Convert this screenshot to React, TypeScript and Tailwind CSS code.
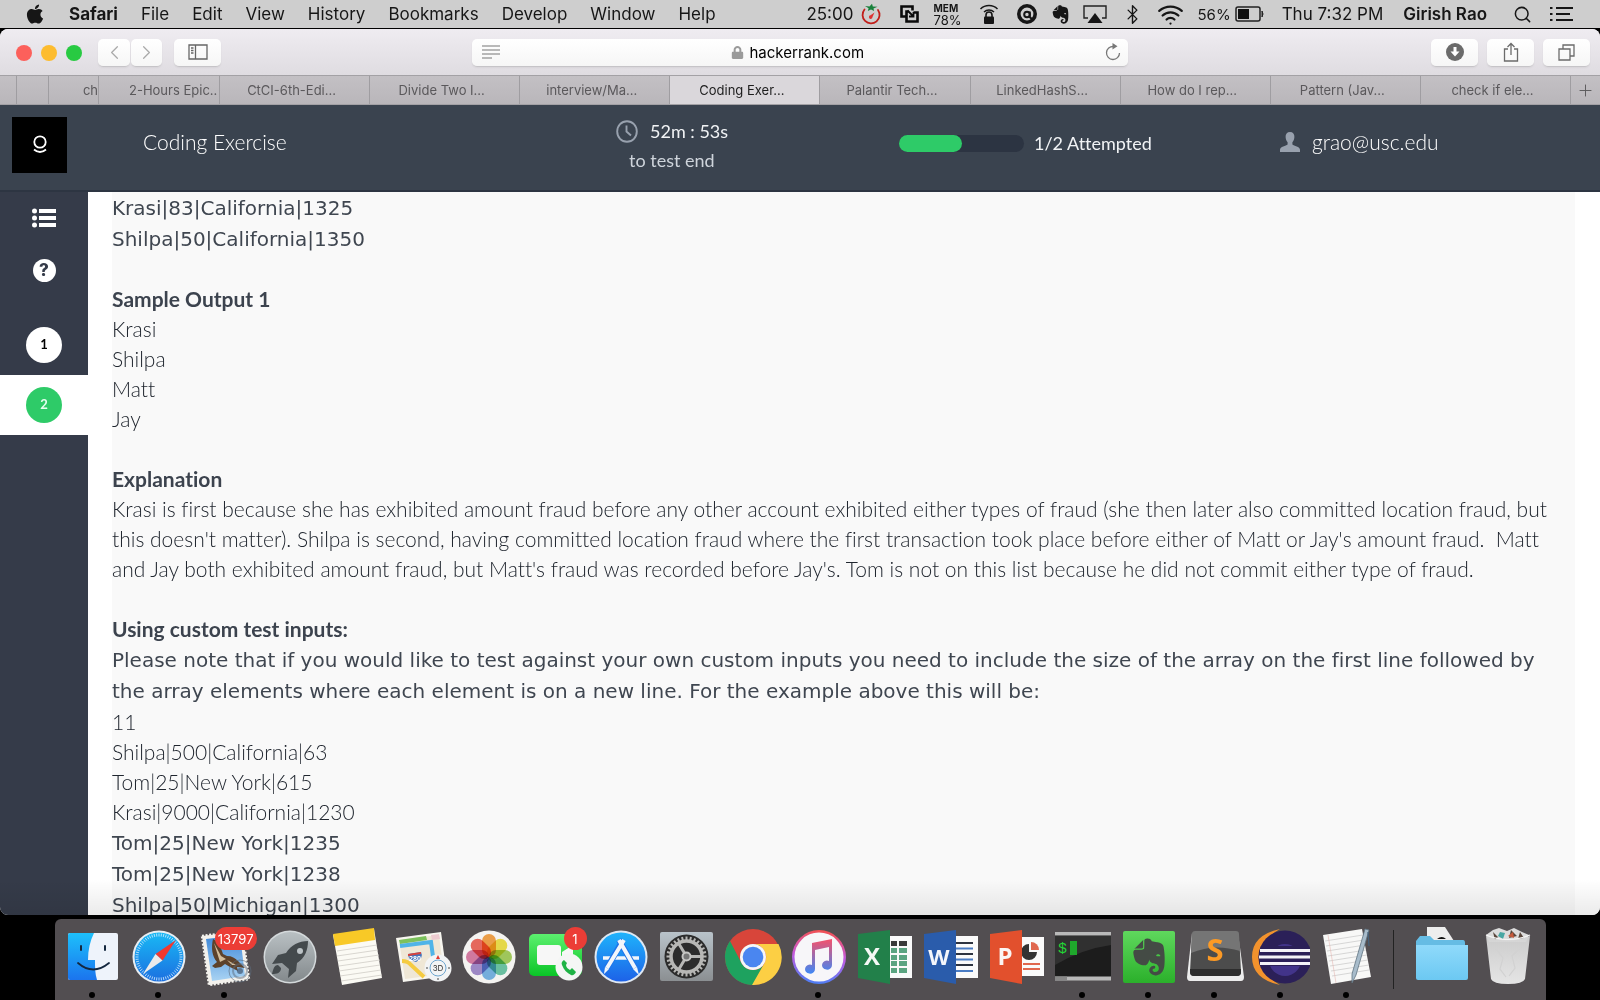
import React from "react";
import { FaApple, FaLock, FaEvernote } from "react-icons/fa";
import { Bluetooth, Wifi, Search, ChevronLeft, ChevronRight, Plus } from "lucide-react";

const menus = ["File", "Edit", "View", "History", "Bookmarks", "Develop", "Window", "Help"];

function MenuBar() {
  return (
    <header className="flex h-[28px] shrink-0 items-center justify-between bg-[#cecece] font-['Inter','Roboto',sans-serif] text-[17px] leading-[27px] whitespace-nowrap text-[#161616]">
      <nav aria-label="Menu bar" className="flex items-center gap-[23px] pl-6">
        <button aria-label="Apple" className="flex">
          <FaApple size={22} />
        </button>
        <button className="font-bold">Safari</button>
        {menus.map((m) => (
          <button key={m}>{m}</button>
        ))}
      </nav>
      <div className="flex items-center pr-[26px]">
        <span>25:00</span>
        <svg className="ml-2" width="20" height="22" viewBox="0 0 20 22" fill="none">
          <path d="M3.500 6.500A8.500 8.500 0 1 0 17 7" stroke="#c11f1a" strokeWidth="1.800" strokeLinecap="round" />
          <path d="M4 3l4.500.6L11 .8l.8 2.800 4.700.2-4 1.700.6 2.500-3.100-1.600-3.200 1.600.8-2.800z" fill="#18803a" />
          <path d="M13.500 9.500l-2 4.500a1.800 1.800 0 1 1-2-1.700z" fill="#d33" />
        </svg>
        <svg className="ml-[18px]" width="20" height="20" viewBox="0 0 20 20" fill="none" stroke="#0b0b0b" strokeWidth="2.600">
          <path d="M7 12.500H2.500V2.500h11v4" />
          <path d="M9.500 7.500H7.500V17.500h11v-9h-4" />
          <path d="M8.500 6.500l6 6M14.500 8v4.500H10" strokeWidth="1.800" />
        </svg>
        <span className="ml-[14px] flex flex-col text-[13px] leading-[13px]">
          <b className="text-[10px] leading-[12px]">MEM</b>
          <span>78%</span>
        </span>
        <svg className="ml-[18px]" width="20" height="22" viewBox="0 0 20 22" fill="none" stroke="#161616">
          <path d="M1.500 6a12 12 0 0 1 17 0M5 9a7.500 7.500 0 0 1 10 0" strokeWidth="1.500" />
          <path d="M7 14v-2a3 3 0 0 1 6 0v2" strokeWidth="1.600" />
          <rect x="5" y="13.500" width="10" height="7.500" rx="1" fill="#161616" stroke="none" />
        </svg>
        <svg className="ml-[18px]" width="20" height="20" viewBox="0 0 20 20">
          <circle cx="10" cy="10" r="8.200" fill="none" stroke="#161616" strokeWidth="3.600" />
          <circle cx="10" cy="10.500" r="2.800" fill="none" stroke="#161616" strokeWidth="2" />
          <path d="M12.800 7.500v5.500l2.500 2.500" fill="none" stroke="#161616" strokeWidth="2" />
        </svg>
        <FaEvernote className="ml-[13px]" size={21} />
        <svg className="ml-3" width="24" height="20" viewBox="0 0 24 20" fill="none">
          <path d="M5 14H1V2h22v12h-4" stroke="#222" strokeWidth="1.400" />
          <path d="M12 9l7.500 10h-15z" fill="#161616" />
        </svg>
        <Bluetooth className="ml-[15px]" size={21} strokeWidth={1.6} />
        <Wifi className="ml-[14px]" size={27} strokeWidth={2} />
        <span className="ml-[13px] text-[15px]">56%</span>
        <svg className="ml-1" width="29" height="16" viewBox="0 0 29 16">
          <rect x="1" y="1" width="24" height="14" rx="2" fill="none" stroke="#222" strokeWidth="1.500" />
          <rect x="3" y="3" width="11" height="10" fill="#111" />
          <path d="M27 5q2 3 0 6z" fill="#222" stroke="#222" />
        </svg>
        <span className="ml-[18px]">Thu 7:32 PM</span>
        <button className="ml-5 font-semibold">Girish Rao</button>
        <button aria-label="Search" className="ml-[26px]">
          <Search size={19} strokeWidth={1.9} />
        </button>
        <button aria-label="Notifications" className="ml-[18px]">
          <svg width="24" height="14" viewBox="0 0 24 14" stroke="#161616" strokeWidth="2">
            <path d="M0 1h2.500M0 7h2.500M0 13h2.500M6 1h17M6 7h14M6 13h17" />
          </svg>
        </button>
      </div>
    </header>
  );
}

const toolButton =
  "flex h-[28px] items-center justify-center rounded-[5px] border-b border-[#c6c4c8] bg-linear-to-b from-white to-[#f6f6f6] text-[#6b6b6b] shadow-xs";

function Toolbar() {
  return (
    <div className="grid h-[46px] shrink-0 grid-cols-[1fr_41.5%_1fr] items-center bg-linear-to-b from-[#efecf1] to-[#dfdce1] px-[10px] pt-px">
      <div className="flex items-center">
        <div className="flex gap-[9px] pl-[6px]">
          <button aria-label="Close" className="size-4 rounded-full bg-[#fc605b]" />
          <button aria-label="Minimize" className="size-4 rounded-full bg-[#fdbc2f]" />
          <button aria-label="Zoom" className="size-4 rounded-full bg-[#28ca42]" />
        </div>
        <div className="ml-4 flex gap-[1px]">
          <button aria-label="Back" className={toolButton + " w-8"}>
            <ChevronLeft size={23} strokeWidth={1.3} className="text-[#aaa]" />
          </button>
          <button aria-label="Forward" className={toolButton + " w-[31px]"}>
            <ChevronRight size={23} strokeWidth={1.3} className="text-[#aaa]" />
          </button>
        </div>
        <button aria-label="Sidebar" className={toolButton + " ml-3 w-[47px]"}>
          <svg width="20" height="16" viewBox="0 0 20 16" fill="none" stroke="#666" strokeWidth="1.300">
            <path d="M1 1h18v14H1zM7.500 1v14M3 4h2.500M3 6.500h2.500M3 9h2.500" />
          </svg>
        </button>
      </div>
      <div className="flex h-[28px] items-center rounded-[5px] border-b border-[#c6c4c8] bg-linear-to-b from-white to-[#f6f6f6] px-[10px] shadow-xs">
        <svg width="18" height="14" viewBox="0 0 18 14" stroke="#777" strokeWidth="1.200">
          <path d="M0 1h18M0 5h18M0 9h18M0 13h10" />
        </svg>
        <div className="flex flex-1 items-center justify-center gap-[6px]">
          <FaLock size={13} className="text-[#9a9a9a]" />
          <label className="sr-only" htmlFor="address">Address</label>
          <input
            id="address"
            readOnly
            value="hackerrank.com"
            className="mt-px h-[24px] w-[124px] bg-transparent font-['Inter',sans-serif] text-[15px] leading-[24px] text-black outline-none"
          />
        </div>
        <button aria-label="Reload" className="mr-[-4px]">
          <svg width="18" height="18" viewBox="0 0 18 18" fill="none">
            <path d="M9.500 3.500A6.500 6.500 0 1 0 15.500 10" stroke="#777" strokeWidth="1.300" />
            <path d="M8.500 0l5 3.300-5 3.300z" fill="#777" />
          </svg>
        </button>
      </div>
      <div className="flex items-center justify-end gap-[9px]">
        <button aria-label="Downloads" className={toolButton + " w-[47px]"}>
          <svg width="18" height="18" viewBox="0 0 18 18">
            <circle cx="9" cy="9" r="9" fill="#6b6b6b" />
            <path d="M7.500 4h3v4.500h3L9 13.500 4.500 8.500h3z" fill="#fff" />
          </svg>
        </button>
        <button aria-label="Share" className={toolButton + " w-[47px]"}>
          <svg width="16" height="20" viewBox="0 0 16 20" fill="none" stroke="#6b6b6b" strokeWidth="1.300">
            <path d="M5 7H1.500v12h13V7H11M8 13V1.500M4.500 5L8 1.500 11.500 5" />
          </svg>
        </button>
        <button aria-label="Show all tabs" className={toolButton + " w-[47px]"}>
          <svg width="17" height="17" viewBox="0 0 17 17" fill="none" stroke="#6b6b6b" strokeWidth="1.300">
            <path d="M1 5h11v11H1zM5 5V1h11v11h-4" />
          </svg>
        </button>
      </div>
    </div>
  );
}

const tabs = [
  { title: "CtCI-6th-Edi..." },
  { title: "Divide Two I..." },
  { title: "interview/Ma..." },
  { title: "Coding Exer...", active: true },
  { title: "Palantir Tech..." },
  { title: "LinkedHashS..." },
  { title: "How do I rep..." },
  { title: "Pattern (Jav..." },
  { title: "check if ele..." },
];

function TabBar() {
  return (
    <div
      role="tablist"
      className="flex h-[30px] shrink-0 border-y border-[#a3a1a5] bg-linear-to-b from-[#c3c0c4] to-[#b9b6ba] font-['Inter',sans-serif] text-[13px] whitespace-nowrap text-[#5a585b]"
    >
      <button role="tab" aria-label="Tab" className="w-[17px] border-r border-[#9f9da1]" />
      <button role="tab" aria-label="Tab" className="w-8 border-r border-[#9f9da1]" />
      <button role="tab" className="flex w-[50px] items-center justify-end overflow-hidden border-r border-[#9f9da1] pt-px">
        <span>ch</span>
      </button>
      <button role="tab" className="flex w-[121px] items-center overflow-hidden border-r border-[#9f9da1] pt-px pl-[30px]">
        2-Hours Epic..
      </button>
      {tabs.map((t) => (
        <button
          key={t.title}
          role="tab"
          aria-selected={!!t.active}
          className={
            t.active
              ? "min-w-0 flex-1 border-r border-[#9f9da1] bg-[#dad7db] pt-px pr-[6px] text-[#1d1d1d]"
              : "min-w-0 flex-1 border-r border-[#9f9da1] pt-px pr-[6px]"
          }
        >
          {t.title}
        </button>
      ))}
      <button aria-label="New tab" className="flex w-[29px] items-center justify-center">
        <Plus size={19} strokeWidth={1.2} />
      </button>
    </div>
  );
}

function ExamHeader() {
  return (
    <div className="grid h-[87px] shrink-0 grid-cols-[143px_473fr_283fr_381fr_320fr] border-b-2 border-[#2d3542] bg-[#3a434f] font-['Lato',sans-serif] text-[18px] whitespace-nowrap text-[#f1f3f5] [font-variant-ligatures:none]">
      <div className="pt-3 pl-3">
        <div className="flex h-14 w-[55px] items-center justify-center bg-black">
          <svg width="14" height="20" viewBox="0 0 14 20" fill="none" stroke="#fff" strokeWidth="1.800">
            <circle cx="7" cy="7" r="5.700" />
            <path d="M1 14.500q6 5 12 0" />
          </svg>
        </div>
      </div>
      <h1 className="self-center pb-3 text-[21px] font-light text-white">Coding Exercise</h1>
      <div className="flex flex-col items-start pt-3">
        <div className="flex items-center gap-3 leading-[29px]">
          <svg width="22" height="24" viewBox="0 0 22 24" fill="none" stroke="#98a1ae" strokeWidth="1.900">
            <ellipse cx="11" cy="11.500" rx="9.800" ry="10.300" />
            <path d="M10.500 5.500v6l4.500 4" />
          </svg>
          <span>52m : 53s</span>
        </div>
        <span className="pl-[13px] leading-[29px] text-[#ced4db]">to test end</span>
      </div>
      <div className="flex items-center gap-[10px] pb-[9px]">
        <div
          role="progressbar"
          aria-label="Attempted"
          aria-valuenow={50}
          className="h-[17px] w-[125px] rounded-full bg-[#2c3442]"
        >
          <div className="h-full w-1/2 rounded-full bg-[#2ecb68]" />
        </div>
        <span>1/2 Attempted</span>
      </div>
      <div className="flex items-center gap-3 pb-3 text-[21px] font-light text-white">
        <svg width="20" height="20" viewBox="0 0 20 20" fill="#98a1ae">
          <path d="M10 0c3 0 4.600 2 4.400 5-.1 2.300-.9 4-2 5.200v2.300c1.500 1.800 7.600 2 7.600 5.200V20H0v-2.300c0-3.200 6.100-3.400 7.600-5.200v-2.300c-1.100-1.200-1.900-2.900-2-5.200C5.400 2 7 0 10 0z" />
        </svg>
        <span>grao@usc.edu</span>
      </div>
    </div>
  );
}

function Sidebar() {
  return (
    <nav aria-label="Questions" className="flex w-[88px] shrink-0 flex-col items-center bg-[#353b49] font-['Lato',sans-serif] text-[13px] font-bold">
      <button aria-label="All questions" className="mt-4">
        <svg width="24" height="20" viewBox="0 0 24 20" fill="#fff">
          <circle cx="2.500" cy="3" r="2.500" />
          <circle cx="2.500" cy="10" r="2.500" />
          <circle cx="2.500" cy="17" r="2.500" />
          <path d="M7 1h17v4H7zM7 8h17v4H7zM7 15h17v4H7z" />
        </svg>
      </button>
      <button aria-label="Help" className="mt-[31px] flex size-[23px] items-center justify-center rounded-full bg-white font-['Inter',sans-serif] text-[17px] font-extrabold text-[#353b49]">
        ?
      </button>
      <div className="mt-[33px] flex h-[60px] w-full items-center justify-center">
        <button className="size-9 rounded-full bg-white text-black">1</button>
      </div>
      <div className="flex h-[60px] w-full items-center justify-center bg-white">
        <button className="size-9 rounded-full bg-[#2ecb68] text-[#e6fff0]">2</button>
      </div>
    </nav>
  );
}

const wide = "pt-px font-['DejaVu_Sans',sans-serif] text-[20px] leading-[31px] font-normal text-[#3f4650]";
const heading = "font-bold text-[#3c434e]";

function Problem() {
  return (
    <main className="min-w-0 flex-1 overflow-hidden bg-white pr-[25px] pl-6">
      <div className="bg-[#f9f9f9] font-['Lato',sans-serif] text-[21px] leading-[30px] font-light whitespace-pre text-[#20262f] [font-variant-ligatures:none]">
        <p className={wide}>
          Krasi|83|California|1325
          <br />
          Shilpa|50|California|1350
        </p>
        <h2 className={heading + " mt-[29px]"}>Sample Output 1</h2>
        <p>
          Krasi
          <br />
          Shilpa
          <br />
          Matt
          <br />
          Jay
        </p>
        <h2 className={heading + " mt-[30px]"}>Explanation</h2>
        <p>
          Krasi is first because she has exhibited amount fraud before any other account exhibited either types of fraud (she then later also committed location fraud, but
          <br />
          this doesn't matter). Shilpa is second, having committed location fraud where the first transaction took place before either of Matt or Jay's amount fraud.{"  "}Matt
          <br />
          and Jay both exhibited amount fraud, but Matt's fraud was recorded before Jay's. Tom is not on this list because he did not commit either type of fraud.
        </p>
        <h2 className={heading + " mt-[30px]"}>Using custom test inputs:</h2>
        <p className={wide}>
          Please note that if you would like to test against your own custom inputs you need to include the size of the array on the first line followed by
          <br />
          the array elements where each element is on a new line. For the example above this will be:
        </p>
        <p>
          11
          <br />
          Shilpa|500|California|63
          <br />
          Tom|25|New York|615
          <br />
          Krasi|9000|California|1230
        </p>
        <p className={wide}>
          Tom|25|New York|1235
          <br />
          Tom|25|New York|1238
          <br />
          Shilpa|50|Michigan|1300
        </p>
      </div>
    </main>
  );
}

const officeDoor = "M4 7L36 3v54L4 51z";
const letter = "font-['Open_Sans',sans-serif] font-bold";

function ticks(n: number, cx: number, cy: number, r1: number, r2: number) {
  return Array.from({ length: n }, (_, i) => {
    const a = (i * 2 * Math.PI) / n;
    return `M${cx + r1 * Math.cos(a)} ${cy + r1 * Math.sin(a)}L${cx + r2 * Math.cos(a)} ${cy + r2 * Math.sin(a)}`;
  }).join("");
}

const petals = ["#f49b38", "#efe03a", "#9ccb4e", "#5fc3a0", "#6aaee6", "#9a83cc", "#d6719f", "#ef5d50"];

const dock: { name: string; running?: boolean; badge?: string; art: React.ReactNode }[] = [
  {
    name: "Finder",
    running: true,
    art: (
      <>
        <rect x="6" y="6" width="50" height="47" rx="2" fill="#eef3fb" />
        <path d="M8 6h24c-4 8-6 17-6 27h7c0 7 0 14 2 20H8a2 2 0 0 1-2-2V8a2 2 0 0 1 2-2z" fill="url(#finder)" />
        <path d="M19 19v4M43 19v4" stroke="#14273f" strokeWidth="2" strokeLinecap="round" />
        <path d="M16 36q15 13 31 0" fill="none" stroke="#14273f" strokeWidth="1.800" strokeLinecap="round" />
      </>
    ),
  },
  {
    name: "Safari",
    running: true,
    art: (
      <>
        <circle cx="31" cy="30" r="26.500" fill="#e9eef2" />
        <circle cx="31" cy="30" r="24.500" fill="url(#safari)" />
        <path d={ticks(60, 31, 30, 20.5, 23.5)} stroke="#d5efff" strokeWidth=".8" />
        <path d="M48 13L27.500 27l7 6.500z" fill="#f1382f" />
        <path d="M15 47l12.500-20 7 6.500z" fill="#ebebeb" />
      </>
    ),
  },
  {
    name: "Mail",
    running: true,
    badge: "13797",
    art: (
      <>
        <path d="M8 9l40-5 7 48-40 6z" fill="#f3f1ec" stroke="#f3f1ec" strokeWidth="2.500" strokeDasharray="2 1.600" />
        <path d="M12 12l34-4 5 41-33 5z" fill="url(#mail)" />
        <path d="M19 12c5 2 8 8 10 15l4 2c5 0 8 2 11 5l7 7-8-1 1 4-8-4-5-3-4 3-6 1-3-2 5-4c-5-6-6-14-4-23z" fill="#5d422b" />
        <path d="M20 16l7 13 5 3-6 3zM33 33l9 5-4 0z" fill="#d3bd9b" />
        <circle cx="46" cy="44" r="11" fill="none" stroke="#5b6a7c" strokeWidth="1" opacity=".6" />
        <circle cx="46" cy="44" r="7" fill="none" stroke="#5b6a7c" strokeWidth="2" opacity=".5" />
        <circle cx="46" cy="44" r="3" fill="#43566e" opacity=".7" />
      </>
    ),
  },
  {
    name: "Launchpad",
    art: (
      <>
        <circle cx="30" cy="30" r="26.500" fill="#d4d9db" />
        <circle cx="30" cy="30" r="25" fill="url(#silver)" />
        <path d="M48 14c-9 0-17 4-22 12l-8 2-6 9 10-1 7 6-1 9 8-7 1-8c8-5 11-13 11-22z" fill="#444a4d" />
        <path d="M18 38c-4 0-5 5-6 9 5 0 9-1 9-6z" fill="#444a4d" />
        <circle cx="40" cy="24" r="3" fill="#bcc3c6" />
      </>
    ),
  },
  {
    name: "Notes",
    art: (
      <>
        <path d="M7 8l41-6 8 49-40 7z" fill="#fbfaf4" />
        <path d="M7 7l41-6 1 12L9 19z" fill="#f8c927" />
        <path d="M11 24l40-6M11 29l41-6M12 34l41-6M13 39l41-6M13 44l41-6M14 49l41-6M15 54l41-6" stroke="#cfcdc6" strokeWidth=".8" />
      </>
    ),
  },
  {
    name: "Maps",
    art: (
      <>
        <path d="M4 11l45-6 6 44-44 6z" fill="#f8f6f0" />
        <path d="M7 13l40-5 5 39-39 5z" fill="#efe7d6" />
        <path d="M7 13l27-4 1 4-27 4z" fill="#7cc15c" />
        <path d="M8 19l31-4 3 22" fill="none" stroke="#4fb4e8" strokeWidth="4" />
        <path d="M10 34q6 0 9 4l13 12" fill="none" stroke="#f5cb41" strokeWidth="4" />
        <path d="M39 8l8-1 1 5-8 1z" fill="#eecbd0" />
        <path d="M16 27l13-2q3 6-5 10-8-2-8-8z" fill="#4374bd" />
        <path d="M16 27l13-2v2l-13 2z" fill="#d8433d" />
        <text x="17" y="34" fontSize="7" fill="#fff" className={letter}>280</text>
        <circle cx="46" cy="41" r="13.500" fill="#f3f4f5" />
        <circle cx="46" cy="41" r="8" fill="none" stroke="#6da5cf" strokeWidth="1" />
        <path d="M46 28l2 4h-4z" fill="#e0392f" />
        <path d="M34 41h2M56 41h2M46 51v2" stroke="#444" />
        <text x="46" y="44" textAnchor="middle" fontSize="8" fill="#333" className="font-['Inter',sans-serif]">3D</text>
      </>
    ),
  },
  {
    name: "Photos",
    art: (
      <>
        <circle cx="31" cy="30" r="26.500" fill="#f4f3f1" />
        {petals.map((c, i) => (
          <rect key={c} x="24" y="7" width="14" height="23" rx="7" fill={c} opacity=".9" transform={`rotate(${i * 45} 31 30)`} className="mix-blend-multiply" />
        ))}
      </>
    ),
  },
  {
    name: "FaceTime",
    badge: "1",
    art: (
      <>
        <rect x="5" y="7" width="53" height="42" rx="5" fill="url(#green)" />
        <rect x="13" y="18" width="24" height="20" rx="3" fill="#f7f7f7" />
        <path d="M38 25l11-7v20l-11-7z" fill="#f7f7f7" />
        <circle cx="45" cy="40" r="13.500" fill="#f4f6f5" />
        <path d="M40 33c-2 1-3 3-2 5 2 5 5 8 9 10 2 1 4-1 5-3l-4-4-2 2c-2-1-4-3-4-5l1-2z" fill="#1fb346" />
      </>
    ),
  },
  {
    name: "App Store",
    art: (
      <>
        <circle cx="31" cy="30" r="26.500" fill="#dfe8f2" />
        <circle cx="31" cy="30" r="24.500" fill="url(#store)" />
        <path d="M13 31h36" stroke="#f2f6fb" strokeWidth="3.500" />
        <path d="M33 13L17 41M29 13l16 28" stroke="#1e74ea" strokeWidth="6" />
        <path d="M34 13L17 41M29 13l16 28" stroke="#f2f6fb" strokeWidth="4" />
        <path d="M15 40l4 2-5 5zM43 42l4-2 2 8z" fill="#f2f6fb" />
      </>
    ),
  },
  {
    name: "System Preferences",
    art: (
      <>
        <rect x="4" y="5" width="53" height="49" rx="2" fill="url(#steel)" />
        <circle cx="30.500" cy="29.500" r="22" fill="#2c2c2c" />
        <path d={ticks(28, 30.5, 29.5, 16, 20)} stroke="#b7b7b5" strokeWidth="2" />
        <circle cx="30.500" cy="29.500" r="15.500" fill="none" stroke="#b7b7b5" strokeWidth="3.500" />
        <path d="M30.500 29.500H45M30.500 29.500L23 17M30.500 29.500L23 42" stroke="#b7b7b5" strokeWidth="3" />
        <circle cx="30.500" cy="29.500" r="4" fill="#777" stroke="#c6c6c4" strokeWidth="2" />
      </>
    ),
  },
  {
    name: "Chrome",
    art: (
      <>
        <circle cx="31" cy="30" r="28" fill="#d8453a" />
        <path d="M19.700 36.500L8 13.900A28 28 0 0 0 31 58l11.300-21.500A13 13 0 0 1 19.700 36.500z" fill="#1ea25f" />
        <path d="M31 17h25.500A28 28 0 0 1 30 58l12.300-21.500A13 13 0 0 0 31 17z" fill="#fccf44" />
        <circle cx="31" cy="30" r="13" fill="#f6f7f7" />
        <circle cx="31" cy="30" r="10.300" fill="#4a86f0" />
      </>
    ),
  },
  {
    name: "iTunes",
    running: true,
    art: (
      <>
        <circle cx="31" cy="30" r="27" fill="url(#tunes)" />
        <circle cx="31" cy="30" r="24.500" fill="#f7f6f9" />
        <path d="M24 16l20-4v26a5 4.500 0 1 1-3-4V20l-14 3v19a5 4.500 0 1 1-3-4z" fill="url(#note)" />
      </>
    ),
  },
  {
    name: "Excel",
    art: (
      <>
        <path d="M36 9h22v42H36z" fill="#fafafa" />
        <path d="M37 14h6v5h-6zM45 14h8v5h-8z" fill="#3a3a3a" />
        <path d="M37 21h6v5h-6zM45 21h8v5h-8zM37 28h6v5h-6zM45 28h8v5h-8zM37 34h6v5h-6zM45 34h8v5h-8zM37 41h6v5h-6zM45 41h8v5h-8z" fill="#5ba481" />
        <path d={officeDoor} fill="#22804a" />
        <text x="18" y="38" textAnchor="middle" fontSize="24" fill="#f4f8f5" className={letter}>X</text>
      </>
    ),
  },
  {
    name: "Word",
    art: (
      <>
        <path d="M36 9h22v42H36z" fill="#fafafa" />
        <path d="M36 16h17M36 27h17M36 38h17" stroke="#2d3340" strokeWidth="2" />
        <path d="M36 21.500h17M36 32.500h17M36 44h17" stroke="#4a7cc4" strokeWidth="2" />
        <path d={officeDoor} fill="#2a5cab" />
        <text x="19" y="38" textAnchor="middle" fontSize="22" fill="#f4f6fb" className={letter}>W</text>
      </>
    ),
  },
  {
    name: "PowerPoint",
    art: (
      <>
        <path d="M36 10h22v39H36z" fill="#fafafa" />
        <path d="M43 17v8h8a8 8 0 1 1-8-8z" fill="#333" />
        <path d="M45 15a8 8 0 0 1 8 8h-8z" fill="#e0674e" />
        <path d="M37 37h17M37 42h17" stroke="#e0674e" strokeWidth="2" />
        <path d={officeDoor} fill="#e2502d" />
        <text x="19" y="38" textAnchor="middle" fontSize="24" fill="#fbf5f3" className={letter}>P</text>
      </>
    ),
  },
  {
    name: "Terminal",
    running: true,
    art: (
      <>
        <rect x="3" y="5" width="56" height="48" fill="#1c1c1c" />
        <path d="M3 38Q30 22 59 18V9H3z" fill="#303030" />
        <path d="M3 5h56v3.500H3zM3 49.500h56v4H3z" fill="#b9b9b9" />
        <path d="M3 49.500h12v4H3z" fill="#888" />
        <text x="6" y="26" fontSize="15" fill="#23d536" className="font-['Liberation_Mono',monospace]">$</text>
        <path d="M18 14h7v14h-7z" fill="#1fa82c" />
      </>
    ),
  },
  {
    name: "Evernote",
    running: true,
    art: (
      <>
        <rect x="5" y="4" width="52" height="52" rx="2" fill="url(#ever)" />
        <FaEvernote x="10" y="9" size={42} color="#444b45" />
      </>
    ),
  },
  {
    name: "Sublime Text",
    running: true,
    art: (
      <>
        <path d="M8 6h46l6 44q0 4-3 4H6q-3 0-3-4z" fill="#ececec" />
        <path d="M11 4h41q3 0 3 3l2 38q0 4-4 4H10q-4 0-4-4L8 7q0-3 3-3z" fill="#4c4c4c" />
        <path d="M11 4h41q3 0 3 3l1 17Q30 16 7 26L8 7q0-3 3-3z" fill="#757575" />
        <path d="M6 42h51v3q0 4-4 4H10q-4 0-4-4z" fill="#2d2d2d" />
        <text x="31" y="34" textAnchor="middle" fontSize="31" fill="#fc9a25" className={letter}>S</text>
      </>
    ),
  },
  {
    name: "Eclipse",
    running: true,
    art: (
      <>
        <path d="M30 2Q2 8 2 30t28 28q-18-10-18-28T30 2z" fill="#f2922d" />
        <circle cx="35" cy="30" r="26.500" fill="#2b2058" />
        <circle cx="35" cy="33" r="16" fill="#42348a" />
        <path d="M11 19h48q4 10 1 20H10q-3-10 1-20z" fill="#2b2058" />
        <path d="M10 23.500h50M9 30h52M10 36.500h50" stroke="#f4f3f8" strokeWidth="3" />
      </>
    ),
  },
  {
    name: "TextEdit",
    running: true,
    art: (
      <>
        <path d="M7 8l39-6 9 48-40 7z" fill="#f8f8f7" />
        <path d="M9 14l38-6M10 19l38-6M11 24l38-6M12 29l38-6M13 34l38-6M14 39l38-6M15 44l38-6M16 49l37-6" stroke="#cdcdcd" strokeWidth=".8" />
        <path d="M12 8l8 48" stroke="#e6b9b3" strokeWidth=".6" />
        <path d="M49 2l4 1-13 45-4 8v-9z" fill="#a8bccb" stroke="#5f7382" strokeWidth=".8" />
        <path d="M52 5l1 14" stroke="#44607a" strokeWidth="1.200" />
      </>
    ),
  },
];

const places: typeof dock = [
  {
    name: "Downloads",
    art: (
      <>
        <path d="M15 0h18l9 14H15z" fill="#ededed" />
        <path d="M25 12q5-4 9 0z" fill="#111" />
        <path d="M4 14l4-5h10l4 4h29q2 0 2 3v5H4z" fill="#65bce4" />
        <path d="M4 18h52v33q0 2-2 2H6q-2 0-2-2z" fill="url(#folder)" />
      </>
    ),
  },
  {
    name: "Trash",
    art: (
      <>
        <path d="M8 8l7-5 6-2 8 3 7-3 8 4 7 3-3 7H11z" fill="#dcdcdc" />
        <path d="M15 5l5 5-3 3zM33 3l6 6-8 2zM42 5l4 6-6 1z" fill="#59473c" />
        <path d="M22 5l5 1-2 6-5-3z" fill="#48a7a3" />
        <path d="M30 9l5-4 1 6z" fill="#c55a3c" />
        <path d="M8 9q22 9 44 0l-5 43q-2 5-17 5t-17-5z" fill="url(#bin)" opacity=".95" />
        <path d="M8 8q22 9 44 0" fill="none" stroke="#f6f6f6" strokeWidth="1.200" />
        <path d="M18 22l7 9-3 11 6 8M43 20l-9 9 3 12-6 8" fill="none" stroke="#d2d2d2" strokeWidth="1.200" />
      </>
    ),
  },
];

function Gradient({ id, from, to }: { id: string; from: string; to: string }) {
  return (
    <linearGradient id={id} x1="0" y1="0" x2="0" y2="1">
      <stop stopColor={from} />
      <stop offset="1" stopColor={to} />
    </linearGradient>
  );
}

function DockItem({ item }: { item: (typeof dock)[number] }) {
  return (
    <button aria-label={item.name} className="relative flex w-[66px] flex-col items-center pt-2">
      <svg width="60" height="60" viewBox="0 0 60 60" fill="none">
        {item.art}
      </svg>
      {item.badge && (
        <span className="absolute top-2 right-0 flex h-[23px] min-w-[23px] items-center justify-center rounded-full bg-[#ec3d36] px-[3px] font-['Inter',sans-serif] text-[13px] leading-[16px] text-white">
          {item.badge}
        </span>
      )}
      {item.running && <span className="mt-[5px] size-[6px] rounded-full bg-black" />}
    </button>
  );
}

function Dock() {
  return (
    <footer className="mx-auto mt-1 flex h-[81px] shrink-0 rounded-t-md bg-[#524e51] pr-[5px] pl-1">
      <svg width="0" height="0" className="absolute">
        <defs>
          <Gradient id="finder" from="#1dc0fb" to="#1b74ee" />
          <Gradient id="safari" from="#19b9f5" to="#1b6fe0" />
          <Gradient id="mail" from="#3d87d8" to="#a9d3f3" />
          <Gradient id="silver" from="#b9c0c3" to="#83898c" />
          <Gradient id="green" from="#5cf06f" to="#0ac527" />
          <Gradient id="store" from="#1fb3fb" to="#1d62e8" />
          <Gradient id="steel" from="#b9c3ca" to="#8b8f92" />
          <Gradient id="ever" from="#5fd85d" to="#2bb02b" />
          <Gradient id="folder" from="#8fdafb" to="#6cc8f2" />
          <Gradient id="bin" from="#d2d2d2" to="#ededed" />
          <Gradient id="note" from="#f5516b" to="#3f87f5" />
          <linearGradient id="tunes" x1=".6" y1="0" x2=".5" y2="1">
            <stop stopColor="#f5504e" />
            <stop offset=".5" stopColor="#c35be0" />
            <stop offset="1" stopColor="#4d7ef5" />
          </linearGradient>
        </defs>
      </svg>
      {dock.map((d) => (
        <DockItem key={d.name} item={d} />
      ))}
      <div className="flex w-[30px] justify-center pt-[11px]">
        <div className="h-[59px] w-px bg-[#222]" />
      </div>
      {places.map((d) => (
        <DockItem key={d.name} item={d} />
      ))}
    </footer>
  );
}

export default function App() {
  return (
    <div className="flex h-screen flex-col overflow-hidden bg-black">
      <MenuBar />
      <div className="mt-px flex min-h-0 flex-1 flex-col overflow-hidden rounded-lg bg-white">
        <Toolbar />
        <TabBar />
        <ExamHeader />
        <div className="relative flex min-h-0 flex-1">
          <Sidebar />
          <Problem />
          <div className="pointer-events-none absolute inset-x-0 bottom-0 h-9 bg-linear-to-b from-transparent to-black/8" />
        </div>
      </div>
      <Dock />
    </div>
  );
}
